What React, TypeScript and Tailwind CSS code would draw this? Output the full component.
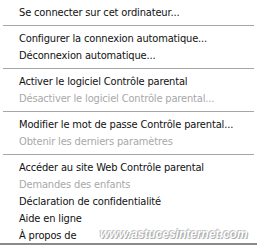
import React from "react";

type Item = { label: string; disabled?: boolean } | "sep";

const items: Item[] = [
  { label: "Se connecter sur cet ordinateur..." },
  "sep",
  { label: "Configurer la connexion automatique..." },
  { label: "Déconnexion automatique..." },
  "sep",
  { label: "Activer le logiciel Contrôle parental" },
  { label: "Désactiver le logiciel Contrôle parental...", disabled: true },
  "sep",
  { label: "Modifier le mot de passe Contrôle parental..." },
  { label: "Obtenir les derniers paramètres", disabled: true },
  "sep",
  { label: "Accéder au site Web Contrôle parental" },
  { label: "Demandes des enfants", disabled: true },
  { label: "Déclaration de confidentialité" },
  { label: "Aide en ligne" },
  { label: "À propos de" },
];

export default function App() {
  return (
    <div className="relative w-[257px] h-[245px] bg-white overflow-hidden font-['DejaVu_Sans_Condensed','Liberation_Sans',sans-serif] text-[11px] tracking-[-0.15px]">
      <div className="flex flex-col pt-[4px]">
        {items.map((it, i) =>
          it === "sep" ? (
            <div key={i} className="h-[9px] flex items-center px-[3px]">
              <div className="h-px w-full bg-[#a6a6a6]" />
            </div>
          ) : (
            <div
              key={i}
              className={`h-[17px] leading-[17px] pl-[19px] whitespace-nowrap ${
                it.disabled ? "text-[#a8a8a8]" : "text-[#111111]"
              }`}
            >
              {it.label}
            </div>
          )
        )}
      </div>
      <div className="absolute left-0 right-0 bottom-0 h-[2px] bg-[#8a8a8a]" />
      <div
        className="absolute left-[100px] top-[225px] text-[12px] font-bold italic tracking-[0px] text-white font-['Liberation_Sans',sans-serif] whitespace-nowrap"
        style={{ textShadow: "0 0 1px #9a9a9a, 1px 1px 0 #b0b0b0, -1px -1px 0 #c8c8c8" }}
      >
        www.astucesinternet.com
      </div>
    </div>
  );
}
